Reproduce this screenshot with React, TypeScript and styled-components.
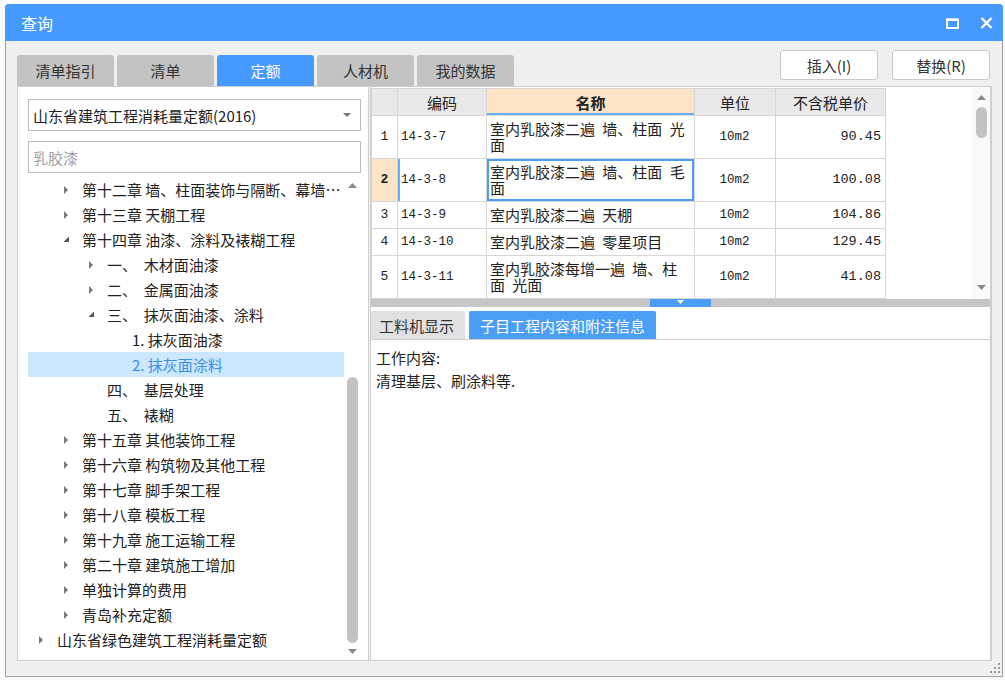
import React from "react";
import styled, { createGlobalStyle } from "styled-components";

type TreeItem = {
  level: number;
  text: string;
  caret?: "open" | "closed";
  selected?: boolean;
};

const treeItems: TreeItem[] = [
  { level: 1, caret: "closed", text: "第十二章 墙、柱面装饰与隔断、幕墙工程" },
  { level: 1, caret: "closed", text: "第十三章 天棚工程" },
  { level: 1, caret: "open", text: "第十四章 油漆、涂料及裱糊工程" },
  { level: 2, caret: "closed", text: "一、  木材面油漆" },
  { level: 2, caret: "closed", text: "二、  金属面油漆" },
  { level: 2, caret: "open", text: "三、  抹灰面油漆、涂料" },
  { level: 3, text: "1. 抹灰面油漆" },
  { level: 3, text: "2. 抹灰面涂料", selected: true },
  { level: 2, text: "四、  基层处理" },
  { level: 2, text: "五、  裱糊" },
  { level: 1, caret: "closed", text: "第十五章 其他装饰工程" },
  { level: 1, caret: "closed", text: "第十六章 构筑物及其他工程" },
  { level: 1, caret: "closed", text: "第十七章 脚手架工程" },
  { level: 1, caret: "closed", text: "第十八章 模板工程" },
  { level: 1, caret: "closed", text: "第十九章 施工运输工程" },
  { level: 1, caret: "closed", text: "第二十章 建筑施工增加" },
  { level: 1, caret: "closed", text: "单独计算的费用" },
  { level: 1, caret: "closed", text: "青岛补充定额" },
  { level: 0, caret: "closed", text: "山东省绿色建筑工程消耗量定额" },
];

const rows = [
  { no: "1", code: "14-3-7", name: "室内乳胶漆二遍 墙、柱面 光面", unit: "10m2", price: "90.45" },
  { no: "2", code: "14-3-8", name: "室内乳胶漆二遍 墙、柱面 毛面", unit: "10m2", price: "100.08", selected: true },
  { no: "3", code: "14-3-9", name: "室内乳胶漆二遍 天棚", unit: "10m2", price: "104.86" },
  { no: "4", code: "14-3-10", name: "室内乳胶漆二遍 零星项目", unit: "10m2", price: "129.45" },
  { no: "5", code: "14-3-11", name: "室内乳胶漆每增一遍 墙、柱面 光面", unit: "10m2", price: "41.08" },
];

const topTabs = ["清单指引", "清单", "定额", "人材机", "我的数据"];

const GlobalStyle = createGlobalStyle`
  html, body {
    margin: 0;
    padding: 0;
  }
  body {
    background: #fafafa;
    font-family: "Noto Sans CJK SC", "Noto Sans", sans-serif;
    color: #333;
  }
`;

const Caret = ({ kind }: { kind?: "open" | "closed" }) => {
  if (kind === "closed")
    return (
      <svg width="6" height="10" viewBox="0 0 6 10">
        <path d="M1 1 L5 5 L1 9 Z" fill="#7a7a7a" />
      </svg>
    );
  if (kind === "open")
    return (
      <svg width="7" height="7" viewBox="0 0 7 7">
        <path d="M6 0.5 L6 6 L0.5 6 Z" fill="#555" />
      </svg>
    );
  return null;
};

const Arrow = ({ dir }: { dir: "up" | "down" }) => (
  <svg width="9" height="5" viewBox="0 0 9 5">
    <path d={dir === "up" ? "M0 5 L4.5 0 L9 5 Z" : "M0 0 L9 0 L4.5 5 Z"} fill="#8a8a8a" />
  </svg>
);

const App = () => {
  return (
    <Page>
      <GlobalStyle />
      <Dialog>
        <TitleBar>
          <Title>查询</Title>
          <TitleButtons>
            <svg width="13" height="11" viewBox="0 0 13 11">
              <rect x="1" y="1.5" width="11" height="8.5" fill="none" stroke="#fff" strokeWidth="2" />
              <rect x="1" y="0.5" width="11" height="2.5" fill="#fff" />
            </svg>
            <svg width="13" height="12" viewBox="0 0 13 12">
              <path d="M1.5 1 L11.5 11 M11.5 1 L1.5 11" stroke="#fff" strokeWidth="2.4" />
            </svg>
          </TitleButtons>
        </TitleBar>
        <Body>
          <TopRow>
            <TabStrip>
              {topTabs.map((t) => (
                <Tab key={t} $active={t === "定额"}>
                  {t}
                </Tab>
              ))}
            </TabStrip>
            <ActionGroup>
              <ActionButton>插入(I)</ActionButton>
              <ActionButton>替换(R)</ActionButton>
            </ActionGroup>
          </TopRow>
          <Main>
            <LeftPanel>
              <SelectBox>
                <span>山东省建筑工程消耗量定额(2016)</span>
                <svg width="8" height="4" viewBox="0 0 8 4">
                  <path d="M0 0 L8 0 L4 4 Z" fill="#777" />
                </svg>
              </SelectBox>
              <SearchBox placeholder="乳胶漆" />
              <Tree>
                <TreeList>
                  {treeItems.map((it, i) => (
                    <TreeRow key={i} $level={it.level} $selected={!!it.selected}>
                      <CaretBox>
                        <Caret kind={it.caret} />
                      </CaretBox>
                      <TreeLabel>{it.text}</TreeLabel>
                    </TreeRow>
                  ))}
                </TreeList>
                <ScrollBar>
                  <ScrollArrow>
                    <Arrow dir="up" />
                  </ScrollArrow>
                  <ScrollTrack>
                    <ScrollThumb $top={184} $height={266} />
                  </ScrollTrack>
                  <ScrollArrow>
                    <Arrow dir="down" />
                  </ScrollArrow>
                </ScrollBar>
              </Tree>
            </LeftPanel>
            <RightPanel>
              <GridArea>
                <GridWrap>
                  <Grid>
                    <colgroup>
                      <col style={{ width: 26 }} />
                      <col style={{ width: 89 }} />
                      <col style={{ width: 208 }} />
                      <col style={{ width: 81 }} />
                      <col style={{ width: 110 }} />
                    </colgroup>
                    <thead>
                      <tr>
                        <HeadCell />
                        <HeadCell>编码</HeadCell>
                        <HeadCell $focus>名称</HeadCell>
                        <HeadCell>单位</HeadCell>
                        <HeadCell>不含税单价</HeadCell>
                      </tr>
                    </thead>
                    <tbody>
                      {rows.map((r) => (
                        <tr key={r.no}>
                          <NoCell $selected={!!r.selected}>{r.no}</NoCell>
                          <CodeCell $selected={!!r.selected}>{r.code}</CodeCell>
                          <NameCell $selected={!!r.selected}>{r.name}</NameCell>
                          <UnitCell>{r.unit}</UnitCell>
                          <PriceCell>{r.price}</PriceCell>
                        </tr>
                      ))}
                    </tbody>
                  </Grid>
                </GridWrap>
                <GridScroll>
                  <ScrollArrow>
                    <Arrow dir="up" />
                  </ScrollArrow>
                  <ScrollTrack>
                    <ScrollThumb $top={2} $height={31} />
                  </ScrollTrack>
                  <ScrollArrow>
                    <Arrow dir="down" />
                  </ScrollArrow>
                </GridScroll>
              </GridArea>
              <Splitter>
                <SplitHandle>
                  <svg width="7" height="4" viewBox="0 0 7 4">
                    <path d="M0 0 L7 0 L3.5 4 Z" fill="#fff" />
                  </svg>
                </SplitHandle>
              </Splitter>
              <DetailTabs>
                <DetailTab>工料机显示</DetailTab>
                <DetailTab $active>子目工程内容和附注信息</DetailTab>
              </DetailTabs>
              <DetailBody>
                <div>工作内容:</div>
                <div>清理基层、刷涂料等.</div>
              </DetailBody>
            </RightPanel>
          </Main>
        </Body>
        <Grip>
          <svg width="10" height="10" viewBox="0 0 10 10">
            <g fill="#9a9a9a">
              <rect x="8" y="0" width="2" height="2" />
              <rect x="4" y="4" width="2" height="2" />
              <rect x="8" y="4" width="2" height="2" />
              <rect x="0" y="8" width="2" height="2" />
              <rect x="4" y="8" width="2" height="2" />
              <rect x="8" y="8" width="2" height="2" />
            </g>
          </svg>
        </Grip>
      </Dialog>
    </Page>
  );
};

export default App;

const Page = styled.div`
  width: 1005px;
  height: 680px;
  box-sizing: border-box;
  padding: 4px 2px 3px 5px;
`;

const Dialog = styled.div`
  position: relative;
  width: 998px;
  height: 673px;
  box-sizing: border-box;
  display: flex;
  flex-direction: column;
  background: #f0f0f0;
  border: 1px solid #a3a3a3;
  border-top: 0;
  border-radius: 4px 4px 0 0;
`;

const TitleBar = styled.div`
  height: 39px;
  margin: 0 -1px;
  display: flex;
  align-items: center;
  justify-content: space-between;
  padding: 1px 10px 0 16px;
  box-sizing: border-box;
  background: #4599ff;
  border-radius: 4px 4px 0 0;
`;

const Title = styled.div`
  color: #fff;
  font-size: 16px;
`;

const TitleButtons = styled.div`
  display: flex;
  align-items: center;
  gap: 21px;
`;

const Body = styled.div`
  flex: 1;
  display: flex;
  flex-direction: column;
  padding: 0 10px 15px 11px;
`;

const TopRow = styled.div`
  height: 45px;
  display: flex;
  justify-content: space-between;
`;

const TabStrip = styled.div`
  align-self: flex-end;
  display: flex;
  gap: 3px;
`;

const Tab = styled.div<{ $active?: boolean }>`
  width: 97px;
  height: 31px;
  display: flex;
  align-items: center;
  justify-content: center;
  border-radius: 3px 3px 0 0;
  font-size: 15px;
  background: ${(p) => (p.$active ? "#4599ff" : "#c3c3c3")};
  color: ${(p) => (p.$active ? "#fff" : "#333")};
`;

const ActionGroup = styled.div`
  display: flex;
  gap: 14px;
  padding-top: 9px;
  margin-right: 2px;
`;

const ActionButton = styled.button`
  width: 98px;
  height: 30px;
  background: #fff;
  border: 1px solid #c9c9c9;
  border-radius: 3px;
  font-family: inherit;
  font-size: 15px;
  color: #333;
  padding: 0;
`;

const Main = styled.div`
  flex: 1;
  display: flex;
  gap: 1px;
  min-height: 0;
`;

const LeftPanel = styled.div`
  width: 352px;
  box-sizing: border-box;
  display: flex;
  flex-direction: column;
  background: #fff;
  border: 1px solid #cfcfcf;
  padding: 12px 7px 0 10px;
`;

const SelectBox = styled.div`
  height: 32px;
  box-sizing: border-box;
  display: flex;
  align-items: center;
  justify-content: space-between;
  padding: 0 9px 0 4px;
  border: 1px solid #bdbdbd;
  font-size: 15px;
  color: #222;
`;

const SearchBox = styled.input`
  height: 32px;
  box-sizing: border-box;
  margin-top: 10px;
  border: 1px solid #bdbdbd;
  padding: 0 4px;
  font-family: inherit;
  font-size: 15px;
  outline: none;
  &::placeholder {
    color: #a0a0a0;
  }
`;

const Tree = styled.div`
  flex: 1;
  display: flex;
  margin-top: 4px;
  min-height: 0;
`;

const TreeList = styled.div`
  flex: 1;
  min-width: 0;
`;

const TreeRow = styled.div<{ $level: number; $selected: boolean }>`
  height: 25px;
  display: flex;
  align-items: center;
  padding-left: ${(p) => p.$level * 25 + 10}px;
  font-size: 15px;
  background: ${(p) => (p.$selected ? "#cce8ff" : "transparent")};
  color: ${(p) => (p.$selected ? "#3a8ee6" : "#222")};
`;

const CaretBox = styled.span`
  width: 19px;
  flex: none;
  display: flex;
  align-items: center;
`;

const TreeLabel = styled.span`
  white-space: pre;
  overflow: hidden;
  text-overflow: ellipsis;
`;

const ScrollBar = styled.div`
  width: 17px;
  display: flex;
  flex-direction: column;
  margin-bottom: 1px;
`;

const ScrollArrow = styled.div`
  height: 16px;
  display: flex;
  align-items: center;
  justify-content: center;
`;

const ScrollTrack = styled.div`
  flex: 1;
  display: flex;
  flex-direction: column;
  align-items: center;
`;

const ScrollThumb = styled.div<{ $top: number; $height: number }>`
  width: 11px;
  margin-top: ${(p) => p.$top}px;
  height: ${(p) => p.$height}px;
  border-radius: 6px;
  background: #c2c2c2;
`;

const RightPanel = styled.div`
  flex: 1;
  display: flex;
  flex-direction: column;
  background: #fff;
  border: 1px solid #cfcfcf;
  border-right-width: 2px;
`;

const GridArea = styled.div`
  height: 212px;
  display: flex;
  overflow: hidden;
`;

const GridWrap = styled.div`
  flex: 1;
  padding-top: 1px;
`;

const Grid = styled.table`
  border-collapse: collapse;
  table-layout: fixed;
  width: 514px;
  font-size: 15px;
  color: #222;
  td,
  th {
    border: 1px solid #d6d6d6;
  }
`;

const HeadCell = styled.th<{ $focus?: boolean }>`
  height: 26px;
  padding: 0;
  font-weight: ${(p) => (p.$focus ? 700 : 400)};
  background: ${(p) => (p.$focus ? "#fde4c6" : "#e8e8e8")};
  box-shadow: ${(p) => (p.$focus ? "inset 0 -2px 0 #6aaef5" : "none")};
`;

const Cell = styled.td`
  padding: 5px 4px 5px 3px;
  line-height: 16px;
  vertical-align: middle;
`;

const NoCell = styled(Cell)<{ $selected: boolean }>`
  text-align: center;
  padding: 0;
  font-family: "Liberation Mono", monospace;
  font-size: 13px;
  font-weight: ${(p) => (p.$selected ? 700 : 400)};
  background: ${(p) => (p.$selected ? "#fde4c6" : "#fff")};
`;

const CodeCell = styled(Cell)<{ $selected: boolean }>`
  font-family: "Liberation Mono", monospace;
  font-size: 12.5px;
  box-shadow: ${(p) => (p.$selected ? "inset 2px 0 0 #6aaef5" : "none")};
`;

const NameCell = styled(Cell)<{ $selected: boolean }>`
  word-spacing: 4px;
  box-shadow: ${(p) => (p.$selected ? "inset 0 0 0 2px #4a9ef5" : "none")};
`;

const UnitCell = styled(Cell)`
  text-align: center;
  font-family: "Liberation Mono", monospace;
  font-size: 12.5px;
`;

const PriceCell = styled(Cell)`
  text-align: right;
  font-family: "Liberation Mono", monospace;
  font-size: 13.5px;
`;

const GridScroll = styled.div`
  width: 18px;
  display: flex;
  flex-direction: column;
  padding: 2px 0 4px;
  background: #fafafa;
`;

const Splitter = styled.div`
  height: 8px;
  display: flex;
  justify-content: center;
  background: #c6c6c6;
  margin-bottom: 4px;
`;

const SplitHandle = styled.div`
  width: 61px;
  display: flex;
  justify-content: center;
  align-items: flex-start;
  padding-top: 1px;
  background: #4a9ef5;
`;

const DetailTabs = styled.div`
  display: flex;
  gap: 4px;
  height: 28px;
`;

const DetailTab = styled.div<{ $active?: boolean }>`
  display: flex;
  align-items: center;
  padding: 0 11px 0 ${(p) => (p.$active ? 11 : 8)}px;
  border-radius: 2px 2px 0 0;
  font-size: 15px;
  background: ${(p) => (p.$active ? "#4a9ef5" : "#e1e1e1")};
  color: ${(p) => (p.$active ? "#fff" : "#333")};
`;

const DetailBody = styled.div`
  flex: 1;
  border-top: 1px solid #cfcfcf;
  padding: 6px 5px;
  font-size: 15px;
  line-height: 23px;
  color: #222;
`;

const Grip = styled.div`
  position: absolute;
  right: 2px;
  bottom: 3px;
  display: flex;
`;
